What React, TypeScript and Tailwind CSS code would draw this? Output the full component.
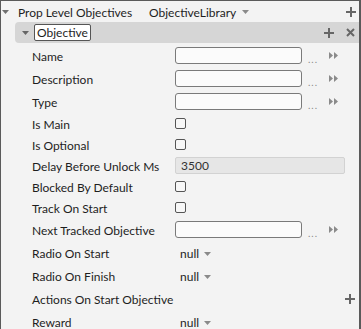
import type { ReactNode } from 'react'

const font = { fontFamily: 'Lato, "Noto Sans", sans-serif' }

function Caret({ className = '' }: { className?: string }) {
  return (
    <svg width="7" height="4" viewBox="0 0 7 4" className={className} aria-hidden>
      <path d="M0 0h7L3.5 4z" fill="currentColor" />
    </svg>
  )
}

function Plus() {
  return (
    <svg width="10" height="10" viewBox="0 0 10 10" aria-hidden>
      <path d="M4 0h2v4h4v2H6v4H4V6H0V4h4z" fill="#666" />
    </svg>
  )
}

function Cross() {
  return (
    <svg width="9" height="9" viewBox="0 0 9 9" aria-hidden>
      <path d="M1 1l7 7M8 1L1 8" stroke="#666" strokeWidth="2" />
    </svg>
  )
}

function Chevrons() {
  return (
    <svg width="9" height="7" viewBox="0 0 9 7" aria-hidden>
      <path d="M0 0l4 3.5L0 7zM5 0l4 3.5L5 7z" fill="#8a8a8a" />
    </svg>
  )
}

function Row({ label, tall, children }: { label: string; tall?: boolean; children?: ReactNode }) {
  return (
    <div className={`grid grid-cols-[143px_1fr] items-center ${tall ? 'h-[23px]' : 'h-[21px]'}`}>
      <span className="translate-y-[1px] text-[12px] leading-none text-[#1e1e1e]">{label}</span>
      <div className="flex items-center">{children}</div>
    </div>
  )
}

function RefField() {
  return (
    <>
      <div className="h-[17px] w-[127px] rounded-[3px] border border-[#7a7a7a] bg-[#fbfbfb]" />
      <span className="ml-[6px] mt-[6px] text-[10px] leading-none tracking-[1px] text-[#8a8a8a]">...</span>
      <span className="ml-[11px] flex">
        <Chevrons />
      </span>
    </>
  )
}

function Check() {
  return <div className="h-[11px] w-[11px] rounded-[2px] border border-[#555] bg-[#f7f7f7]" />
}

function Nullable() {
  return (
    <span className="ml-[5px] flex translate-y-[1px] items-center gap-[5px] text-[12px] leading-none text-[#1e1e1e]">
      null
      <Caret className="text-[#8a8a8a]" />
    </span>
  )
}

export default function App() {
  return (
    <div
      style={font}
      className="h-[329px] w-[361px] overflow-hidden border-l border-t border-r-2 border-[#5a5a5a] bg-[#f3f3f3]"
    >
      <div className="flex h-[21px] items-center">
        <Caret className="ml-[1px] text-[#707070]" />
        <span className="ml-[9px] w-[131px] translate-y-[1px] text-[12px] leading-none text-[#1e1e1e]">
          Prop Level Objectives
        </span>
        <span className="translate-y-[1px] text-[12px] leading-none text-[#1e1e1e]">ObjectiveLibrary</span>
        <Caret className="ml-[6px] text-[#8a8a8a]" />
        <span className="ml-auto mr-[3px] flex">
          <Plus />
        </span>
      </div>

      <div className="ml-[14px] flex h-[21px] items-center rounded-l-[4px] bg-[#d6d6d6]">
        <Caret className="ml-[7px] text-[#666]" />
        <span className="ml-[5px] flex h-[17px] items-center rounded-[2px] border border-[#555] bg-white px-[2px] pt-[1px] text-[12px] leading-none text-[#1e1e1e]">
          Objective
        </span>
        <span className="ml-auto flex">
          <Plus />
        </span>
        <span className="ml-[12px] mr-[4px] flex">
          <Cross />
        </span>
      </div>

      <div className="mt-[1px] pl-[31px]">
        <Row label="Name" tall>
          <RefField />
        </Row>
        <Row label="Description" tall>
          <RefField />
        </Row>
        <Row label="Type" tall>
          <RefField />
        </Row>
        <Row label="Is Main">
          <Check />
        </Row>
        <Row label="Is Optional">
          <Check />
        </Row>
        <Row label="Delay Before Unlock Ms">
          <div className="flex h-[17px] w-[170px] items-center rounded-[2px] border border-[#d2d2d2] bg-[#e6e6e6] pl-[5px] pt-[1px] text-[12px] leading-none text-[#333]">
            3500
          </div>
        </Row>
        <Row label="Blocked By Default">
          <Check />
        </Row>
        <Row label="Track On Start">
          <Check />
        </Row>
        <Row label="Next Tracked Objective" tall>
          <RefField />
        </Row>
        <Row label="Radio On Start" tall>
          <Nullable />
        </Row>
        <Row label="Radio On Finish" tall>
          <Nullable />
        </Row>
        <div className="flex h-[23px] items-center">
          <span className="translate-y-[1px] text-[12px] leading-none text-[#1e1e1e]">Actions On Start Objective</span>
          <span className="ml-auto mr-[4px] flex">
            <Plus />
          </span>
        </div>
        <Row label="Reward" tall>
          <Nullable />
        </Row>
      </div>
    </div>
  )
}
